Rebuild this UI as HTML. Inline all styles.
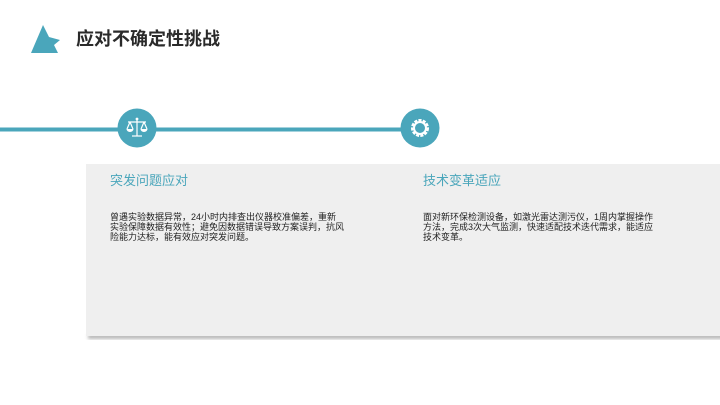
<!DOCTYPE html>
<html><head><meta charset="utf-8"><style>
body{margin:0;width:720px;height:405px;background:#fff;position:relative;overflow:hidden;font-family:"Liberation Sans","Noto Sans CJK SC",sans-serif}
.a{position:absolute}
.t{color:#4aa6bb;font-size:13px;line-height:16px}
.b{color:#222;font-size:9px;line-height:10px;white-space:nowrap}
</style></head><body>
<svg class="a" style="left:0;top:0" width="720" height="405">
<defs><filter id="f" x="-5%" y="-20%" width="110%" height="140%"><feGaussianBlur stdDeviation="1.5"/></filter></defs>
<polygon points="31,53 43,25 49,37 60,40 54,45 58,53" fill="#4aa6bb"/>
<rect x="0" y="127.5" width="410" height="4" fill="#4aa6bb"/>
<circle cx="137" cy="128" r="19.5" fill="#4aa6bb"/>
<circle cx="420" cy="128" r="19.5" fill="#4aa6bb"/>
<g stroke="#fff" stroke-width="1.2" fill="none">
<line x1="137" y1="119" x2="137" y2="136"/><line x1="128" y1="122" x2="146" y2="122"/>
<line x1="132" y1="136" x2="142" y2="136"/>
<path d="M130 122 L127 129 M130 122 L133 129 M144 122 L141 129 M144 122 L147 129"/>
</g>
<path d="M126.5 129 a3.5 3 0 0 0 7 0z M140.5 129 a3.5 3 0 0 0 7 0z" fill="#fff"/>
<circle cx="137" cy="119" r="1.4" fill="#fff"/>
<circle cx="420" cy="128" r="7.5" fill="none" stroke="#fff" stroke-width="3" stroke-dasharray="3 1.2"/>
<circle cx="420" cy="128" r="6" fill="none" stroke="#fff" stroke-width="2"/>
<rect x="88" y="334" width="640" height="5" fill="#b8b8b8" filter="url(#f)"/>
<rect x="86" y="164" width="634" height="172" fill="#efefef"/>
</svg>
<div class="a" style="left:76px;top:28px;font-size:18px;line-height:22px;font-weight:bold;color:#2a2a2a">应对不确定性挑战</div>
<div class="a t" style="left:110px;top:173px">突发问题应对</div>
<div class="a b" style="left:110px;top:212px">曾遇实验数据异常，24小时内排查出仪器校准偏差，重新<br>实验保障数据有效性；避免因数据错误导致方案误判，抗风<br>险能力达标，能有效应对突发问题。</div>
<div class="a t" style="left:423px;top:173px">技术变革适应</div>
<div class="a b" style="left:423px;top:212px">面对新环保检测设备，如激光雷达测污仪，1周内掌握操作<br>方法，完成3次大气监测，快速适配技术迭代需求，能适应<br>技术变革。</div>
</body></html>
